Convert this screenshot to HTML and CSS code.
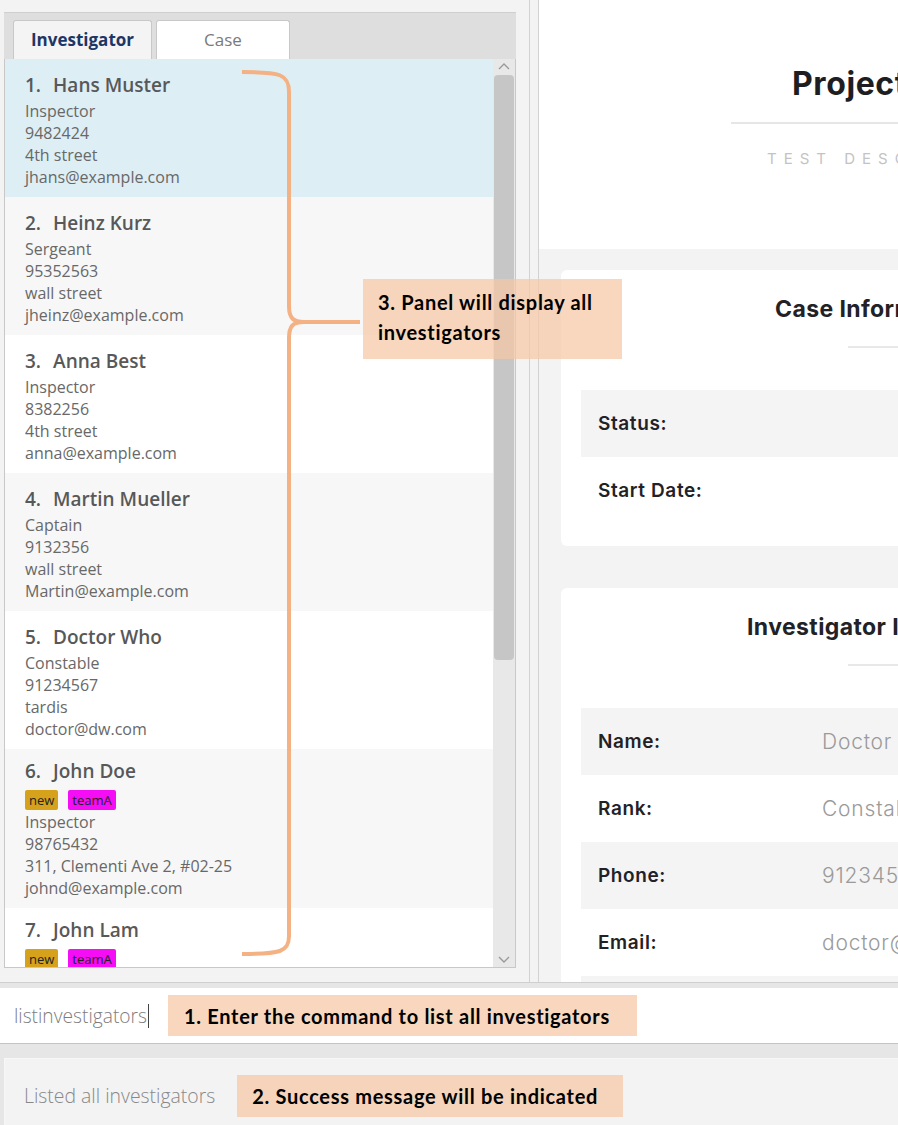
FILE: index.html
```html
<!DOCTYPE html>
<html>
<head>
<meta charset="utf-8">
<link rel="stylesheet" href="styles.css">
</head>
<body>
<div class="app">
  <div class="main">
    <div class="left">
      <div class="tabs">
        <div class="tab active">Investigator</div>
        <div class="tab">Case</div>
      </div>
      <div class="list">
        <div class="items">
          <div class="item selected">
            <div class="name"><span class="num">1.</span>Hans Muster</div>
            <div class="field">Inspector</div><div class="field">9482424</div><div class="field">4th street</div><div class="field">jhans@example.com</div>
          </div>
          <div class="item alt">
            <div class="name"><span class="num">2.</span>Heinz Kurz</div>
            <div class="field">Sergeant</div><div class="field">95352563</div><div class="field">wall street</div><div class="field">jheinz@example.com</div>
          </div>
          <div class="item">
            <div class="name"><span class="num">3.</span>Anna Best</div>
            <div class="field">Inspector</div><div class="field">8382256</div><div class="field">4th street</div><div class="field">anna@example.com</div>
          </div>
          <div class="item alt">
            <div class="name"><span class="num">4.</span>Martin Mueller</div>
            <div class="field">Captain</div><div class="field">9132356</div><div class="field">wall street</div><div class="field">Martin@example.com</div>
          </div>
          <div class="item">
            <div class="name"><span class="num">5.</span>Doctor Who</div>
            <div class="field">Constable</div><div class="field">91234567</div><div class="field">tardis</div><div class="field">doctor@dw.com</div>
          </div>
          <div class="item alt">
            <div class="name name-tagged"><span class="num">6.</span>John Doe</div>
            <div class="tags"><span class="tag tag-new">new</span><span class="tag tag-team">teamA</span></div>
            <div class="field">Inspector</div><div class="field">98765432</div><div class="field">311, Clementi Ave 2, #02-25</div><div class="field">johnd@example.com</div>
          </div>
          <div class="item">
            <div class="name name-tagged"><span class="num">7.</span>John Lam</div>
            <div class="tags"><span class="tag tag-new">new</span><span class="tag tag-team">teamA</span></div>
            <div class="field">Inspector</div><div class="field">98765432</div>
          </div>
        </div>
        <div class="scrollbar">
          <svg class="arrow" width="22" height="16" viewBox="0 0 22 16"><polyline points="6,10 11,5 16,10" fill="none" stroke="#9a9a9a" stroke-width="1.4"/></svg>
          <div class="thumb"></div>
          <div class="track-rest"></div>
          <svg class="arrow" width="22" height="16" viewBox="0 0 22 16"><polyline points="6,6 11,11 16,6" fill="none" stroke="#9a9a9a" stroke-width="1.4"/></svg>
        </div>
      </div>
    </div>
    <div class="divider"></div>
    <div class="right">
      <div class="header">
        <div class="title">Project Details</div>
        <div class="header-line"></div>
        <div class="desc">TEST DESCRIPTION</div>
      </div>
      <div class="card card-case">
        <div class="card-title">Case Information</div>
        <div class="card-line"></div>
        <div class="row shaded"><span class="label">Status:</span><span class="value"></span></div>
        <div class="row"><span class="label">Start Date:</span><span class="value"></span></div>
      </div>
      <div class="card card-inv">
        <div class="card-title card-title-inv">Investigator Information</div>
        <div class="card-line"></div>
        <div class="row shaded"><span class="label">Name:</span><span class="value">Doctor Who</span></div>
        <div class="row"><span class="label">Rank:</span><span class="value">Constable</span></div>
        <div class="row shaded"><span class="label">Phone:</span><span class="value">91234567</span></div>
        <div class="row"><span class="label">Email:</span><span class="value">doctor@dw.com</span></div>
        <div class="row shaded"><span class="label">Address:</span><span class="value">tardis</span></div>
      </div>
    </div>
  </div>
  <div class="command">
    <span class="cmd-text">listinvestigators</span><span class="caret"></span>
    <span class="note note1">1. Enter the command to list all investigators</span>
  </div>
  <div class="result">
    <span class="res-text">Listed all investigators</span>
    <span class="note note2">2. Success message will be indicated</span>
  </div>
  <svg class="brace" width="120" height="900" viewBox="240 60 120 900">
    <path d="M242,72 C280,72 289,74 289,92 L289,306 C289,318 293,322 304,322 L360,322 M304,322 C293,322 289,326 289,338 L289,936 C289,952 280,954 242,954" fill="none" stroke="#f4b183" stroke-width="4" stroke-linejoin="round"/>
  </svg>
  <div class="note note3">3. Panel will display all<br>investigators</div>
</div>
</body>
</html>
```

FILE: styles.css
```css
* { box-sizing: border-box; }
html, body { margin: 0; padding: 0; }
body {
  width: 898px;
  height: 1125px;
  overflow: hidden;
  background: #e6e6e6;
  font-family: "Open Sans", "Noto Sans", sans-serif;
}
.app {
  position: relative;
  width: 898px;
  height: 1125px;
  display: flex;
  flex-direction: column;
  overflow: hidden;
}
.main {
  display: flex;
  height: 983px;
  background: #f3f3f3;
  border-bottom: 1px solid #cfcfcf;
  flex-shrink: 0;
}
.left {
  width: 512px;
  margin-left: 4px;
  padding-top: 12px;
  display: flex;
  flex-direction: column;
  flex-shrink: 0;
}
.tabs {
  height: 47px;
  background: #dedede;
  border-top: 1px solid #cfcfcf;
  display: flex;
  align-items: flex-end;
  padding-left: 9px;
  gap: 4px;
}
.tab {
  height: 39px;
  width: 139px;
  border: 1px solid #c8c8c8;
  border-bottom: none;
  border-radius: 3px 3px 0 0;
  background: #ffffff;
  color: #7a7a7a;
  font-size: 17px;
  display: flex;
  align-items: center;
  justify-content: center;
  padding-bottom: 2px;
}
.tab + .tab { width: 134px; }
.tab.active {
  background: #f4f4f4;
  color: #1c3766;
  font-weight: 700;
}
.list {
  height: 909px;
  display: flex;
  border: 1px solid #c8c8c8;
  border-top: none;
  background: #ffffff;
  overflow: hidden;
}
.items {
  width: 488px;
  overflow: hidden;
}
.item {
  padding: 11px 20px 9px 20px;
  background: #ffffff;
  color: #666666;
}
.item.alt { background: #f7f7f7; }
.item.selected { background: #ddeef5; }
.name {
  font-size: 19px;
  font-weight: 600;
  line-height: 30px;
  color: #585858;
}
.name-tagged { margin-top: -4px; margin-bottom: 4px; }
.num { margin-right: 12px; }
.field {
  font-size: 16px;
  line-height: 22px;
  color: #686868;
}
.tags {
  display: flex;
  gap: 10px;
  height: 21px;
  align-items: flex-start;
}
.tag {
  height: 20px;
  line-height: 20px;
  font-size: 13px;
  color: #222222;
  padding: 0 4px;
  border-radius: 2px;
}
.tag-new { background: #d6a21c; }
.tag-team { background: #f50df5; }
.scrollbar {
  width: 22px;
  background: #e8e8e8;
  display: flex;
  flex-direction: column;
  align-items: center;
}
.arrow { flex-shrink: 0; }
.thumb {
  width: 20px;
  height: 585px;
  background: #c6c6c6;
  border-radius: 4px;
}
.track-rest { flex: 1; }
.divider {
  width: 10px;
  margin-left: 13px;
  border-left: 1px solid #d2d2d2;
  border-right: 1px solid #d2d2d2;
  background: #f3f3f3;
  flex-shrink: 0;
}
.right {
  flex: 1;
  overflow: hidden;
  background: #f3f3f3;
  font-family: "Inter", "Noto Sans", sans-serif;
}
.header {
  height: 249px;
  background: #ffffff;
  padding-top: 63px;
  white-space: nowrap;
}
.title {
  padding-left: 253px;
  font-size: 32px;
  font-weight: 700;
  line-height: 42px;
  letter-spacing: 0.6px;
  color: #1e1e22;
}
.header-line {
  margin: 17px 0 0 192px;
  height: 2px;
  width: 400px;
  background: #e6e6e6;
}
.desc {
  margin-top: 25px;
  padding-left: 228px;
  font-size: 15px;
  letter-spacing: 7px;
  color: #c3c3c3;
  font-weight: 400;
}
.card {
  margin: 21px 0 0 22px;
  width: 600px;
  background: #ffffff;
  border-radius: 6px;
  padding: 24px 0 22px 20px;
  white-space: nowrap;
}
.card-inv { margin-top: 42px; }
.card-title {
  padding-left: 194px;
  font-size: 23px;
  font-weight: 700;
  line-height: 30px;
  letter-spacing: 0.4px;
  color: #222226;
}
.card-title-inv { padding-left: 166px; }
.card-line {
  margin: 22px 0 42px 267px;
  height: 2px;
  width: 300px;
  background: #e8e8e8;
}
.row {
  height: 67px;
  display: flex;
  align-items: center;
  padding-left: 17px;
}
.row.shaded { background: #f4f4f4; }
.label {
  width: 224px;
  font-size: 19px;
  font-weight: 600;
  letter-spacing: 0.6px;
  color: #222226;
}
.value {
  font-size: 21px;
  font-weight: 300;
  letter-spacing: 0.8px;
  color: #9a9a9a;
}
.command {
  margin-top: 5px;
  height: 56px;
  background: #ffffff;
  border-bottom: 1px solid #c4c4c4;
  display: flex;
  align-items: center;
  padding-left: 14px;
  flex-shrink: 0;
}
.cmd-text {
  font-size: 19.2px;
  font-weight: 300;
  color: #7d7d7d;
  letter-spacing: 0;
}
.caret {
  width: 1px;
  height: 24px;
  background: #444444;
  margin-left: 1px;
}
.note {
  background: rgba(245, 200, 165, 0.72);
  font-family: "Lato", "Liberation Sans", sans-serif;
  font-weight: 700;
  font-size: 20px;
  letter-spacing: 0.7px;
  color: #000000;
}
.note1 {
  margin-left: 19px;
  height: 41px;
  width: 469px;
  display: flex;
  align-items: center;
  padding-left: 16px;
}
.result {
  margin: 14px 0 0 4px;
  flex: 1;
  background: #f3f3f3;
  border-top: 1px solid #f7f7f7;
  border-left: 1px solid #f7f7f7;
  display: flex;
  align-items: flex-start;
  padding: 16px 0 0 19px;
}
.res-text {
  font-size: 19.4px;
  font-weight: 300;
  color: #888888;
  line-height: 42px;
  letter-spacing: 0;
}
.note2 {
  margin-left: 22px;
  height: 42px;
  width: 386px;
  display: flex;
  align-items: center;
  padding-left: 15px;
}
.brace {
  position: absolute;
  left: 240px;
  top: 60px;
}
.note3 {
  position: absolute;
  left: 363px;
  top: 279px;
  width: 259px;
  height: 80px;
  padding: 8px 0 0 15px;
  line-height: 30px;
}
```
